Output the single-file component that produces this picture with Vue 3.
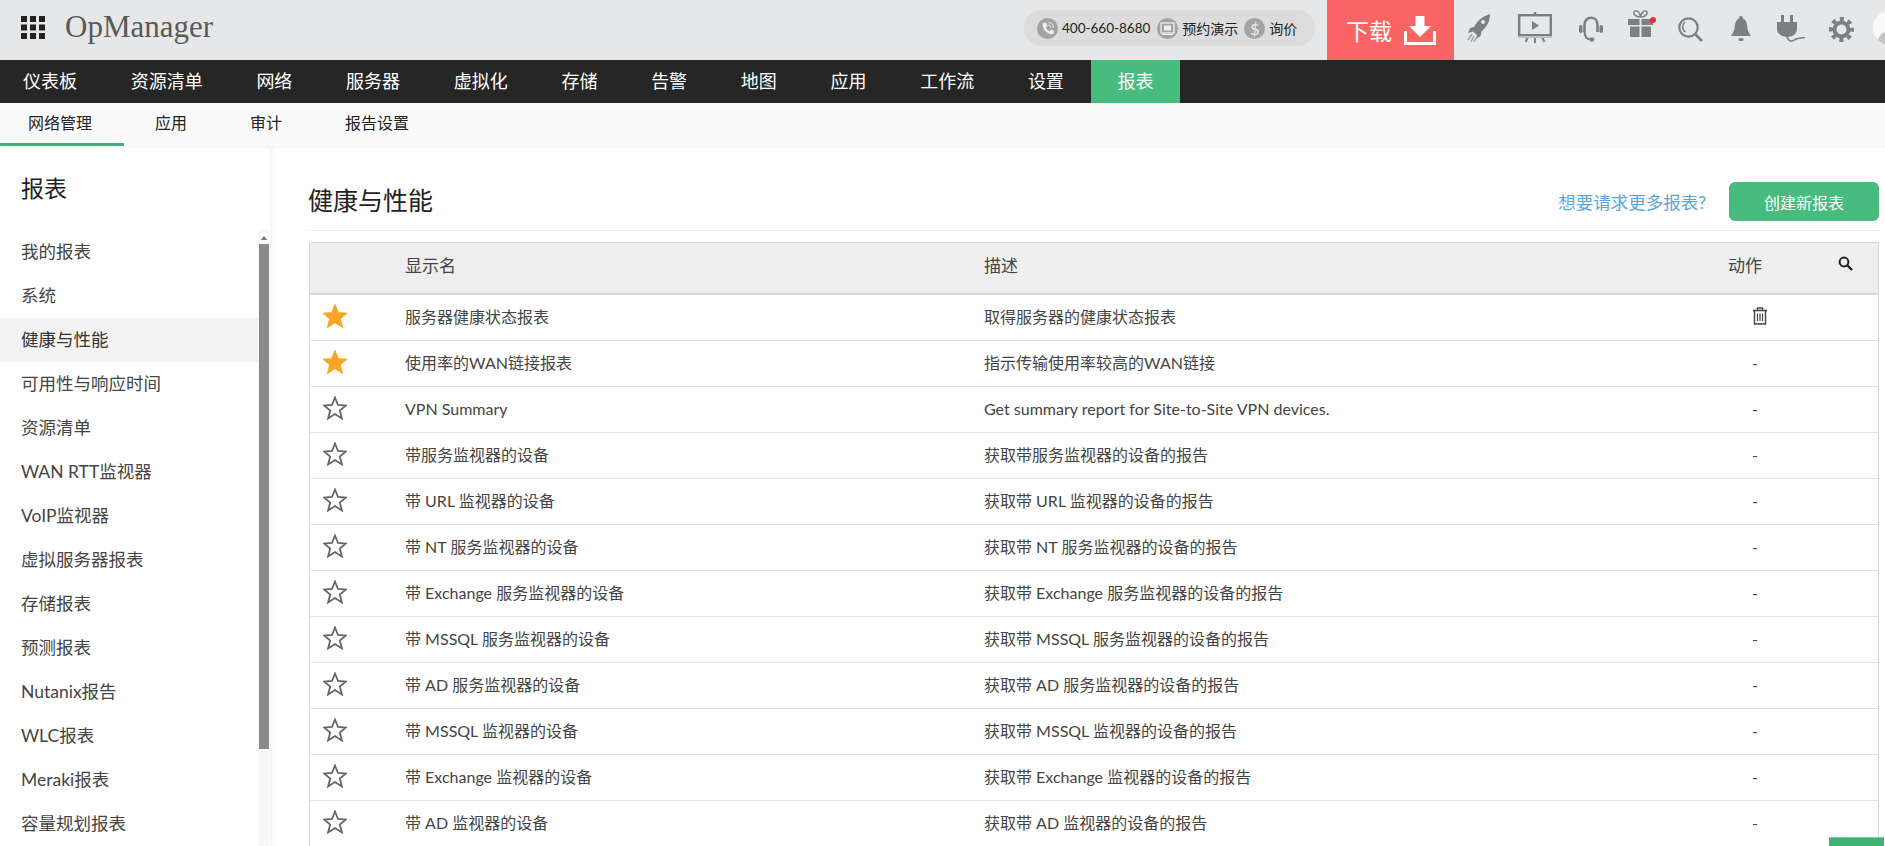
<template>
  <div class="page">
    <header class="topbar">
      <div class="brand">
        <svg class="apps-icon" viewBox="0 0 24 23" width="24" height="23">
          <template v-for="r in 3" :key="r">
            <rect v-for="c in 3" :key="c" :x="(c - 1) * 9" :y="(r - 1) * 8.5" width="6" height="6" fill="#222" />
          </template>
        </svg>
        <span class="logo">OpManager</span>
      </div>

      <div class="top-right">
        <div class="contact-pill">
          <span class="circle">
            <svg viewBox="0 0 21 21" width="21" height="21">
              <path d="M6 5 L9 4.5 L10.5 8 L8.8 9.6 C9.6 11.4 10.6 12.4 12.4 13.2 L14 11.5 L17 13 L16.5 16 C11 17.5 4.5 11 6 5 Z" fill="#eee" />
              <path d="M11.5 4.5 a5.5 5.5 0 0 1 5 5 M11.5 7 a3 3 0 0 1 2.5 2.5" fill="none" stroke="#eee" stroke-width="1" />
            </svg>
          </span>
          <span class="pill-text phone">400-660-8680</span>
          <span class="circle">
            <svg viewBox="0 0 21 21" width="21" height="21">
              <rect x="4" y="5" width="13" height="10" fill="none" stroke="#eee" stroke-width="1.3" />
              <rect x="7" y="7.5" width="7" height="5" fill="#eee" />
              <rect x="5" y="16" width="11" height="1" fill="#eee" />
            </svg>
          </span>
          <span class="pill-text">预约演示</span>
          <span class="circle dollar">$</span>
          <span class="pill-text">询价</span>
        </div>

        <div class="download">
          <span>下载</span>
          <svg viewBox="0 0 32 29" width="32" height="29">
            <path d="M11.5 0 H20.5 V10 H27 L16 21 L5 10 H11.5 Z" fill="#fff" />
            <path d="M1.5 15 V27.5 H30.5 V15" fill="none" stroke="#fff" stroke-width="3" />
          </svg>
        </div>

        <div class="tools">
          <svg class="rocket" viewBox="0 0 24 28" width="24" height="28">
            <path d="M23 0 C16 2 10 7 7 13 L3 14 L1 19 L6 17.5 L10 21 L9 25 L13.5 22 L14.5 17.5 C20 13 23 7 23 0 Z" fill="#7b8084" />
            <circle cx="16" cy="8" r="2" fill="#e6e6e7" />
            <path d="M5 20 L1 26 M7 22 L4 28 M9 24 L7 28" stroke="#9a9ea1" stroke-width="1.4" />
          </svg>
          <svg class="present" viewBox="0 0 34 31" width="34" height="31">
            <path d="M17 0 V3" stroke="#7b8084" stroke-width="2.5" />
            <rect x="1.2" y="3.2" width="31.6" height="20" fill="none" stroke="#7b8084" stroke-width="2.4" />
            <path d="M14 9 V18 L21 13.5 Z" fill="#7b8084" />
            <path d="M17 24 V31 M10 25 L7.5 30 M24 25 L26.5 30" stroke="#7b8084" stroke-width="2" />
            <rect x="0" y="24" width="34" height="2" fill="#bfc1c3" />
          </svg>
          <svg class="headset" viewBox="0 0 24 26" width="24" height="26">
            <path d="M5.5 16 V8.5 C5.5 -0.5 18.5 -0.5 18.5 8.5 V16" fill="none" stroke="#7b8084" stroke-width="2.6" />
            <path d="M5.5 15 C5.5 21 8 23.5 12 23.5" fill="none" stroke="#7b8084" stroke-width="2.2" />
            <circle cx="13" cy="23.5" r="2.2" fill="#7b8084" />
            <rect x="0" y="9" width="3.5" height="8" rx="1.7" fill="#7b8084" />
            <rect x="20.5" y="9" width="3.5" height="8" rx="1.7" fill="#7b8084" />
          </svg>
          <svg class="gift" viewBox="0 0 29 27" width="29" height="27">
            <path d="M12.5 7 C7 7 4 3 7 1 C10 0 12 3 12.5 7 C13 3 16 0 18 1 C21 3 18 7 12.5 7 Z" fill="none" stroke="#7b8084" stroke-width="1.5" />
            <rect x="0" y="9" width="11.5" height="6" fill="#7b8084" />
            <rect x="13.5" y="9" width="11.5" height="6" fill="#7b8084" />
            <rect x="2" y="16.5" width="9.5" height="10.5" fill="#7b8084" />
            <rect x="13.5" y="16.5" width="9.5" height="10.5" fill="#7b8084" />
            <circle cx="25" cy="10" r="3" fill="#ee2b3b" />
          </svg>
          <svg class="glass" viewBox="0 0 25 25" width="25" height="25">
            <circle cx="10.5" cy="10.5" r="9.2" fill="none" stroke="#7b8084" stroke-width="2.2" />
            <path d="M7 5 C3.5 8 4 13 7.5 15" fill="none" stroke="#7b8084" stroke-width="1.6" />
            <path d="M17 17 L24 24" stroke="#7b8084" stroke-width="2.6" />
          </svg>
          <svg class="bell" viewBox="0 0 20 25" width="20" height="25">
            <path d="M10 0 C11.5 0 12 1 12 2.5 C15.5 4 16 8 16.5 12 C17 16 19 18 20 20 H0 C1 18 3 16 3.5 12 C4 8 4.5 4 8 2.5 C8 1 8.5 0 10 0 Z" fill="#7b8084" />
            <rect x="7.5" y="22" width="5" height="3" rx="1.5" fill="#7b8084" />
          </svg>
          <svg class="plug" viewBox="0 0 28 27" width="28" height="27">
            <rect x="4" y="0" width="3" height="8" fill="#7b8084" />
            <rect x="13" y="0" width="3" height="8" fill="#7b8084" />
            <path d="M0 7 H20 V14 C20 19 15 22 10 22 C5 22 0 19 0 14 Z" fill="#7b8084" />
            <path d="M10 22 C12 27 15 27 18 24.5 C21 23 24 23 28 22.5" fill="none" stroke="#7b8084" stroke-width="1.6" />
          </svg>
          <svg class="gear" viewBox="0 0 25 25" width="25" height="25">
            <circle cx="12.5" cy="12.5" r="7" fill="none" stroke="#7b8084" stroke-width="4" />
            <circle cx="12.5" cy="12.5" r="10.5" fill="none" stroke="#7b8084" stroke-width="4" stroke-dasharray="4.2 4.05" stroke-dashoffset="2.1" />
          </svg>
          <span class="avatar"><span class="avatar-body"></span></span>
        </div>
      </div>
    </header>

    <nav class="mainnav">
      <a v-for="item in navItems" :key="item" class="nav-item" :class="{ active: item === '报表' }">{{ item }}</a>
    </nav>

    <div class="subnav">
      <a v-for="(item, i) in subItems" :key="item" class="sub-item" :class="{ active: i === 0 }">{{ item }}</a>
    </div>

    <div class="main">
      <aside class="sidebar">
        <h3 class="side-title">报表</h3>
        <div class="side-body">
          <ul class="side-list">
            <li v-for="item in sideItems" :key="item" :class="{ active: item === '健康与性能' }">{{ item }}</li>
          </ul>
          <div class="scrollbar">
            <span class="scroll-arrow"></span>
            <span class="scroll-thumb"></span>
          </div>
        </div>
      </aside>

      <section class="content">
        <div class="content-head">
          <h2 class="content-title">健康与性能</h2>
          <div class="head-actions">
            <a class="more-link">想要请求更多报表?</a>
            <button class="btn-create">创建新报表</button>
          </div>
        </div>

        <table class="report-table">
          <colgroup>
            <col class="col-star" />
            <col class="col-name" />
            <col class="col-desc" />
            <col class="col-action" />
            <col class="col-search" />
          </colgroup>
          <thead>
            <tr>
              <th></th>
              <th>显示名</th>
              <th>描述</th>
              <th class="th-action">动作</th>
              <th class="th-search">
                <svg viewBox="0 0 15 15" width="15" height="15">
                  <circle cx="6" cy="6" r="4.4" fill="none" stroke="#222" stroke-width="2" />
                  <path d="M9.5 9.5 L14 14" stroke="#222" stroke-width="2.4" />
                </svg>
              </th>
            </tr>
          </thead>
          <tbody>
            <tr v-for="row in rows" :key="row.name">
              <td class="td-star">
                <svg viewBox="0 0 24 24" width="24" height="24">
                  <path
                    d="M12 1.5 L15 9 L23 9.5 L16.8 14.6 L18.9 22.5 L12 18.1 L5.1 22.5 L7.2 14.6 L1 9.5 L9 9 Z"
                    :fill="row.fav ? '#f9a528' : 'none'"
                    :stroke="row.fav ? '#f9a528' : '#666'"
                    stroke-width="1.8"
                  />
                </svg>
              </td>
              <td>{{ row.name }}</td>
              <td>{{ row.desc }}</td>
              <td class="td-action">
                <svg v-if="row.canDelete" class="trash" viewBox="0 0 16 18" width="16" height="18">
                  <path d="M1 3.5 H15 M5.5 3.5 V1 H10.5 V3.5 M2.5 3.5 V17 H13.5 V3.5" fill="none" stroke="#444" stroke-width="1.4" />
                  <path d="M5.5 6.5 V14 M8 6.5 V14 M10.5 6.5 V14" stroke="#444" stroke-width="1.2" />
                </svg>
                <span v-else>-</span>
              </td>
              <td></td>
            </tr>
          </tbody>
        </table>
      </section>
    </div>

    <div class="float-tab"></div>
  </div>
</template>

<script setup>
const navItems = ['仪表板', '资源清单', '网络', '服务器', '虚拟化', '存储', '告警', '地图', '应用', '工作流', '设置', '报表']
const subItems = ['网络管理', '应用', '审计', '报告设置']
const sideItems = [
  '我的报表',
  '系统',
  '健康与性能',
  '可用性与响应时间',
  '资源清单',
  'WAN RTT监视器',
  'VoIP监视器',
  '虚拟服务器报表',
  '存储报表',
  '预测报表',
  'Nutanix报告',
  'WLC报表',
  'Meraki报表',
  '容量规划报表'
]
const rows = [
  { name: '服务器健康状态报表', desc: '取得服务器的健康状态报表', fav: true, canDelete: true },
  { name: '使用率的WAN链接报表', desc: '指示传输使用率较高的WAN链接', fav: true },
  { name: 'VPN Summary', desc: 'Get summary report for Site-to-Site VPN devices.' },
  { name: '带服务监视器的设备', desc: '获取带服务监视器的设备的报告' },
  { name: '带 URL 监视器的设备', desc: '获取带 URL 监视器的设备的报告' },
  { name: '带 NT 服务监视器的设备', desc: '获取带 NT 服务监视器的设备的报告' },
  { name: '带 Exchange 服务监视器的设备', desc: '获取带 Exchange 服务监视器的设备的报告' },
  { name: '带 MSSQL 服务监视器的设备', desc: '获取带 MSSQL 服务监视器的设备的报告' },
  { name: '带 AD 服务监视器的设备', desc: '获取带 AD 服务监视器的设备的报告' },
  { name: '带 MSSQL 监视器的设备', desc: '获取带 MSSQL 监视器的设备的报告' },
  { name: '带 Exchange 监视器的设备', desc: '获取带 Exchange 监视器的设备的报告' },
  { name: '带 AD 监视器的设备', desc: '获取带 AD 监视器的设备的报告' }
]
</script>

<style>
html,
body {
  margin: 0;
  background: #fff;
  overflow: hidden;
}
</style>

<style scoped>
.page {
  position: relative;
  height: 846px;
  overflow: hidden;
  font-family: Lato, 'Noto Sans CJK SC', sans-serif;
  color: #444;
}

.topbar {
  height: 60px;
  background: #e6e7e8;
  display: flex;
  justify-content: space-between;
}

.brand {
  display: flex;
  align-items: center;
  padding-left: 21px;
}

.apps-icon {
  margin-top: -5px;
}

.logo {
  font-family: 'Liberation Serif', serif;
  font-size: 31px;
  color: #5a5a5a;
  margin-left: 20px;
  margin-top: -6px;
}

.top-right {
  display: flex;
  align-items: stretch;
}

.contact-pill {
  align-self: flex-start;
  margin-top: 10px;
  height: 36px;
  width: 291px;
  box-sizing: border-box;
  padding-left: 13px;
  border-radius: 18px;
  background: #dcdcdc;
  display: flex;
  align-items: center;
}

.circle {
  width: 21px;
  height: 21px;
  border-radius: 50%;
  background: #a3a3a3;
  display: flex;
  align-items: center;
  justify-content: center;
  flex: none;
}

.dollar {
  color: #eee;
  font-size: 16px;
  margin-left: 6px;
}

.pill-text {
  font-size: 14px;
  color: #222;
  margin-left: 4px;
  white-space: nowrap;
}

.phone {
  font-size: 13.5px;
  margin-right: 7px;
}

.download {
  width: 127px;
  margin-left: 12px;
  box-sizing: border-box;
  padding-left: 19px;
  background: #fb6464;
  color: #fff;
  font-size: 23px;
  display: flex;
  align-items: center;
  gap: 12px;
}

.tools {
  display: flex;
  align-items: flex-start;
  position: relative;
  width: 431px;
}

.tools svg {
  flex: none;
}

.rocket {
  margin: 14px 0 0 13px;
}

.present {
  margin: 12px 0 0 27px;
}

.headset {
  margin: 16px 0 0 27px;
}

.gift {
  margin: 10px 0 0 25px;
}

.glass {
  margin: 17px 0 0 21px;
}

.bell {
  margin: 16px 0 0 28px;
}

.plug {
  margin: 15px 0 0 26px;
}

.gear {
  margin: 17px 0 0 24px;
}

.avatar {
  position: absolute;
  left: 419px;
  top: 11px;
  width: 34px;
  height: 34px;
  border-radius: 50%;
  background: #fafafa;
  overflow: hidden;
}

.avatar-body {
  position: absolute;
  left: 5px;
  top: 20px;
  width: 24px;
  height: 20px;
  border-radius: 50%;
  background: #c4c4c4;
}

.mainnav {
  height: 43px;
  background: #262626;
  display: flex;
}

.nav-item {
  padding: 0 26.85px;
  line-height: 43px;
  font-size: 18px;
  color: #fff;
  white-space: nowrap;
}

.nav-item:first-child {
  padding-left: 23px;
}

.nav-item.active {
  background: #48bb7f;
}

.subnav {
  height: 43px;
  box-sizing: border-box;
  background: #fafafa;
  display: flex;
  position: relative;
  box-shadow: 0 1px 3px rgba(0, 0, 0, 0.06);
}

.sub-item {
  padding: 0 31.5px;
  line-height: 40px;
  font-size: 16px;
  color: #222;
  white-space: nowrap;
}

.sub-item:first-child {
  padding-left: 28px;
}

.sub-item.active {
  height: 43px;
  box-sizing: border-box;
  border-bottom: 3px solid #48ab7c;
}

.main {
  display: flex;
  height: 700px;
}

.sidebar {
  width: 270px;
  flex: none;
  box-shadow: 1px 0 4px rgba(0, 0, 0, 0.08);
}

.side-title {
  margin: 0;
  height: 84px;
  box-sizing: border-box;
  padding: 26px 0 0 21px;
  font-size: 23px;
  line-height: 32px;
  font-weight: 400;
  color: #222;
}

.side-body {
  display: flex;
  height: 616px;
}

.side-list {
  list-style: none;
  margin: 0;
  padding: 0;
  width: 258px;
  flex: none;
}

.side-list li {
  height: 44px;
  line-height: 44px;
  padding-left: 21px;
  font-size: 17.5px;
  color: #444;
  white-space: nowrap;
}

.side-list li.active {
  background: #f2f2f2;
  color: #333;
}

.scrollbar {
  width: 11px;
  background: #f8f8f8;
  display: flex;
  flex-direction: column;
  align-items: center;
}

.scroll-arrow {
  margin-top: 6px;
  width: 0;
  height: 0;
  border-left: 3.5px solid transparent;
  border-right: 3.5px solid transparent;
  border-bottom: 4px solid #777;
}

.scroll-thumb {
  margin-top: 4px;
  width: 10px;
  height: 505px;
  background: #8a8a8a;
}

.content {
  flex: 1;
  padding: 0 6px 0 39px;
  min-width: 0;
}

.content-head {
  height: 85px;
  box-sizing: border-box;
  border-bottom: 1px solid #eaeaea;
  padding-top: 36px;
  display: flex;
  justify-content: space-between;
  align-items: flex-start;
}

.content-title {
  margin: 0 0 0 -1px;
  font-size: 25px;
  line-height: 36px;
  font-weight: 400;
  color: #222;
}

.head-actions {
  display: flex;
  align-items: center;
  gap: 23px;
}

.more-link {
  font-size: 17.5px;
  color: #5aa5de;
}

.btn-create {
  width: 150px;
  height: 39px;
  border: none;
  border-radius: 6px;
  background: #48bb7f;
  color: #fff;
  font-family: inherit;
  font-size: 16px;
  padding: 0;
}

.report-table {
  margin-top: 11px;
  width: 100%;
  table-layout: fixed;
  border-collapse: separate;
  border-spacing: 0;
  border-left: 1px solid #d8d8d8;
  border-right: 1px solid #d8d8d8;
}

.col-star {
  width: 95px;
}

.col-name {
  width: 579px;
}

.col-action {
  width: 110px;
}

.col-search {
  width: 68px;
}

.report-table th {
  height: 53px;
  box-sizing: border-box;
  background: #eee;
  border-top: 1px solid #d8d8d8;
  border-bottom: 2px solid #d8d8d8;
  text-align: left;
  font-size: 17px;
  font-weight: 400;
  color: #444;
  padding: 0 0 7px;
}

.report-table .th-action {
  text-align: center;
  padding-right: 20px;
}

.report-table .th-search {
  padding: 0 0 10px 28px;
}

.th-search svg {
  display: block;
}

.report-table td {
  height: 46px;
  box-sizing: border-box;
  border-bottom: 1px solid #e2e2e2;
  font-size: 16px;
  color: #444;
  padding: 0 0 3px;
  white-space: nowrap;
}

.report-table .td-star {
  padding-left: 13px;
}

.td-star svg {
  display: block;
}

.report-table .td-action {
  text-align: center;
}

.trash {
  display: block;
  margin: 0 auto;
  transform: translateX(5px);
}

.float-tab {
  position: absolute;
  right: 1px;
  bottom: 0;
  width: 55px;
  height: 9px;
  background: #3cb371;
  border-top: 1px solid #7fcf9f;
  box-sizing: border-box;
}
</style>
